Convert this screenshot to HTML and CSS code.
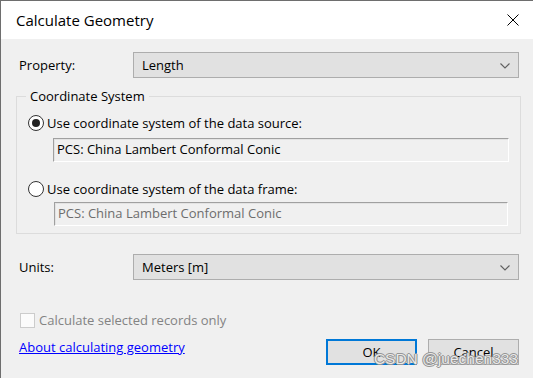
FILE: index.html
```html
<!DOCTYPE html>
<html>
<head>
<meta charset="utf-8">
<link rel="stylesheet" href="styles.css">
</head>
<body>
<div class="window">
  <div class="titlebar">
    <span class="title">Calculate Geometry</span>
    <svg class="close" width="12" height="12" viewBox="0 0 12 12"><path d="M0.5 0.5L11.5 11.5M11.5 0.5L0.5 11.5" stroke="#000" stroke-width="1" fill="none"/></svg>
  </div>
  <div class="content">
    <div class="field-row">
      <span class="label">Property:</span>
      <div class="select"><span>Length</span><svg width="10" height="6" viewBox="0 0 10 6"><path d="M0.5 0.5L5 5L9.5 0.5" stroke="#606060" stroke-width="1.1" fill="none"/></svg></div>
    </div>
    <fieldset class="group">
      <legend>Coordinate System</legend>
      <div class="radio-row"><span class="radio checked"></span><span>Use coordinate system of the data source:</span></div>
      <div class="textbox tb1">PCS: China Lambert Conformal Conic</div>
      <div class="radio-row r2"><span class="radio"></span><span>Use coordinate system of the data frame:</span></div>
      <div class="textbox tb2 disabled">PCS: China Lambert Conformal Conic</div>
    </fieldset>
    <div class="field-row units">
      <span class="label">Units:</span>
      <div class="select"><span>Meters [m]</span><svg width="10" height="6" viewBox="0 0 10 6"><path d="M0.5 0.5L5 5L9.5 0.5" stroke="#606060" stroke-width="1.1" fill="none"/></svg></div>
    </div>
    <div class="check-row"><span class="checkbox"></span><span>Calculate selected records only</span></div>
    <div class="footer">
      <a class="link" href="#">About calculating geometry</a>
      <div class="buttons">
        <button class="btn ok">OK</button>
        <button class="btn">Cancel</button>
      </div>
    </div>
  </div>
  <div class="watermark">CSDN @juechen333</div>
</div>
</body>
</html>
```
FILE: styles.css
```css
html, body { margin: 0; padding: 0; }
body { font-family: "Open Sans", "Noto Sans", sans-serif; font-size: 13px; color: #000; background: #f0f0f0; }
.window {
  position: relative;
  width: 533px; height: 378px; box-sizing: border-box;
  border-top: 1px solid #6e6e6e; border-left: 1px solid #6e6e6e;
  background: #f0f0f0; overflow: hidden;
}
.titlebar {
  height: 38px; background: #fff;
  display: flex; align-items: center; justify-content: space-between;
  padding: 0 14px 0 15px;
}
.title { font-size: 15px; line-height: 20px; margin-top: -1px; }
.close { display: block; }
.content { padding: 0 12px 0 15px; }
.field-row { display: grid; grid-template-columns: 117px 386px; align-items: center; margin-top: 13px; height: 26px; }
.field-row.units { margin-top: 20px; }
.label { padding-left: 3px; line-height: 20px; }
.select {
  height: 26px; box-sizing: border-box;
  background: #e1e1e1; border: 1px solid #adadad;
  display: flex; align-items: center; justify-content: space-between;
  padding: 0 8px 0 8px; line-height: 20px;
}
.select svg { display: block; margin-top: 1px; }
.group {
  margin: 8px 0 0 0; padding: 7px 0 7px 11px;
  width: 505px; box-sizing: border-box;
  border: 1px solid #dcdcdc; min-inline-size: 0;
}
.group legend { padding: 0 4px; margin-left: -2px; line-height: 20px; height: 20px; }
.radio-row { display: flex; align-items: center; height: 20px; gap: 3px; }
.radio-row.r2 { margin-top: 17px; }
.radio {
  width: 16px; height: 16px; box-sizing: border-box;
  border: 1px solid #333; border-radius: 50%; background: #fff;
  display: flex; align-items: center; justify-content: center;
}
.radio.checked::after { content: ""; width: 8px; height: 8px; border-radius: 50%; background: #222; }
.textbox {
  height: 24px; box-sizing: border-box;
  border: 1px solid; border-color: #a0a0a0 #fff #fff #a0a0a0;
  box-shadow: inset 1px 1px 0 #e3e3e3;
  line-height: 21px; padding-left: 3px;
  background: #f0f0f0;
}
.tb1 { margin: 5px 0 0 25px; width: 456px; }
.tb2 { margin: 3px 0 0 26px; width: 454px; }
.textbox.disabled { color: #6d6d6d; }
.check-row { display: flex; align-items: center; height: 20px; margin-top: 30px; padding-left: 4px; gap: 4px; color: #838383; }
.checkbox { width: 15px; height: 15px; box-sizing: border-box; border: 1px solid #cccccc; background: #fbfbfb; }
.footer { display: flex; justify-content: space-between; align-items: flex-start; margin-top: 7px; padding-left: 3px; padding-right: 2px; }
.link { color: #0000ff; text-decoration: underline; line-height: 20px; }
.buttons { display: flex; gap: 11px; margin-top: 2px; }
.btn {
  width: 91px; height: 26px; box-sizing: border-box;
  background: #e1e1e1; border: 1px solid #adadad;
  font: inherit; color: #000; padding: 0;
}
.btn.ok { border: 2px solid #0078d7; }
.watermark {
  position: absolute; right: 15px; bottom: 10px;
  font-family: "Liberation Sans", Arial, sans-serif; font-size: 15.5px;
  color: rgba(255,255,255,0.85);
  text-shadow: 0 0 1px #777, 1px 0 0 #999, -1px 0 0 #999, 0 1px 0 #999, 0 -1px 0 #999;
}
```
